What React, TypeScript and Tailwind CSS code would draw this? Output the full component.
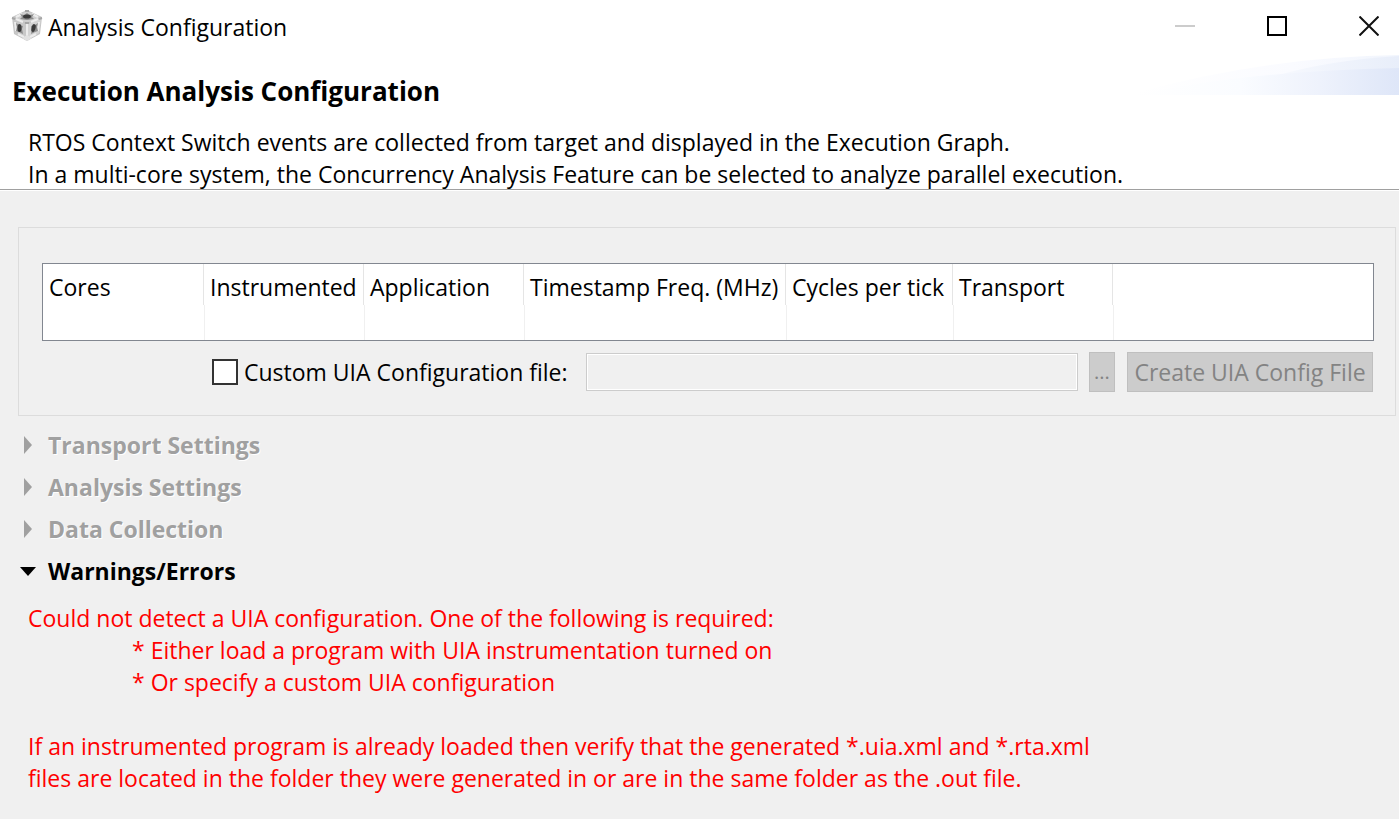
import React, { useState } from 'react';

const columns = [
  { name: 'Cores', width: 'w-[161px]' },
  { name: 'Instrumented', width: 'w-[160px]' },
  { name: 'Application', width: 'w-[160px]' },
  { name: 'Timestamp Freq. (MHz)', width: 'w-[262px]' },
  { name: 'Cycles per tick', width: 'w-[167px]' },
  { name: 'Transport', width: 'w-[160px]' },
];

const sections = ['Transport Settings', 'Analysis Settings', 'Data Collection'];

const CubeIcon = () => (
  <svg width="32" height="32" viewBox="0 0 32 32" aria-hidden="true">
    <path d="M16 0L31 7L29 24L16 31L3 24L1 7Z" fill="#c4c4c4" />
    <path d="M16 1L29 7L16 13L3 7Z" fill="#cfcfcf" />
    <path d="M2 9L15 14V30L4 23Z" fill="#c8c8c8" />
    <path d="M30 9L17 14V30L28 23Z" fill="#d4d4d4" />
    {/* light rims */}
    <path d="M5 7L11 4M21 4L27 7M5 9L12 12M20 12L27 9" stroke="#ededed" strokeWidth="2" />
    <path d="M16 14V30M4 12L5 21M28 12L27 21M7 24L13 27M25 24L19 27" stroke="#ececec" strokeWidth="2" />
    <path d="M1 8L4 9M28 9L31 8M14 1H18M14 13H18" stroke="#a6a6a6" strokeWidth="2" />
    {/* hollow centre of each face */}
    <path d="M9 4L13 5L16 3L19 5L23 4L21 7L23 9L16 10L9 9L11 7Z" fill="#8c8c8c" />
    <ellipse cx="16" cy="6.500" rx="4" ry="2" fill="#3a3a3a" />
    <path d="M5 13L8 15L12 16L11 19L12 24L8 22L5 21L6 17Z" fill="#8c8c8c" />
    <ellipse cx="8.500" cy="18" rx="2" ry="4" fill="#3a3a3a" />
    <path d="M27 13L24 15L20 16L21 19L20 24L24 22L27 21L26 17Z" fill="#8c8c8c" />
    <ellipse cx="22.500" cy="18" rx="2" ry="4" fill="#3a3a3a" transform="rotate(15 22.500 18)" />
    <path d="M11 28L16 31L21 28L16 25Z" fill="#e2e2e2" />
  </svg>
);

const BannerSwoosh = () => (
  <svg className="absolute right-0 top-0" width="264" height="40" viewBox="0 0 264 40" aria-hidden="true">
    <defs>
      <linearGradient id="swooshBack" x1="0" x2="1" y1="0" y2="0">
        <stop offset="0" stopColor="#ffffff" />
        <stop offset="0.600" stopColor="#fafbff" />
        <stop offset="1" stopColor="#f1f5fd" />
      </linearGradient>
      <linearGradient id="swooshMid" x1="0" x2="1" y1="0" y2="0">
        <stop offset="0" stopColor="#f7f9fe" />
        <stop offset="1" stopColor="#e8eefa" />
      </linearGradient>
      <linearGradient id="swooshFront" x1="0" x2="1" y1="0" y2="0">
        <stop offset="0" stopColor="#ffffff" />
        <stop offset="0.400" stopColor="#fafcff" />
        <stop offset="0.700" stopColor="#eef2fc" />
        <stop offset="1" stopColor="#dee6f8" />
      </linearGradient>
    </defs>
    <path d="M0 38Q130 2 264 0V40H0Z" fill="url(#swooshBack)" />
    <path d="M140 21Q195 5 264 1V40H140Z" fill="url(#swooshMid)" />
    <path d="M0 40Q110 16 264 13V40Z" fill="url(#swooshFront)" />
  </svg>
);

const TitleBar = () => (
  <div className="flex h-[55px] items-start justify-between">
    <div className="flex items-start gap-[5px] pl-[11px] pt-[10px]">
      <CubeIcon />
      <span className="pt-px leading-8">Analysis Configuration</span>
    </div>
    <div className="flex gap-[50px] pr-[9px] pt-[5px]">
      <button aria-label="Minimize" className="flex h-[42px] w-[42px] items-center justify-center">
        <svg width="20" height="20" viewBox="0 0 20 20">
          <path d="M0 10H20" stroke="#cccccc" strokeWidth="2" />
        </svg>
      </button>
      <button aria-label="Maximize" className="flex h-[42px] w-[42px] items-center justify-center">
        <svg width="20" height="20" viewBox="0 0 20 20">
          <rect x="1" y="1" width="18" height="18" fill="none" stroke="#000" strokeWidth="2" />
        </svg>
      </button>
      <button aria-label="Close" className="flex h-[42px] w-[42px] items-center justify-center">
        <svg width="20" height="20" viewBox="0 0 20 20">
          <path d="M0.500 0.500L19.500 19.500M19.500 0.500L0.500 19.500" stroke="#111" strokeWidth="2" />
        </svg>
      </button>
    </div>
  </div>
);

const App: React.FC = () => {
  const [custom, setCustom] = useState(false);
  const [open, setOpen] = useState(true);

  return (
    <div className="min-h-screen bg-[#f0f0f0] pb-6 font-['Open_Sans','Noto_Sans',sans-serif] text-[23px] text-black">
      <header className="border-b border-[#a0a0a0] bg-white">
        <TitleBar />
        <div className="relative pt-5">
          <BannerSwoosh />
          <h1 className="pl-3 text-[26px] font-bold leading-8">Execution Analysis Configuration</h1>
          <p className="-mb-px whitespace-nowrap pl-7 pt-[19px] leading-8">
            RTOS Context Switch events are collected from target and displayed in the Execution Graph.
            <br />
            In a multi-core system, the Concurrency Analysis Feature can be selected to analyze parallel execution.
          </p>
        </div>
      </header>

      <main className="border-t border-white pt-9">
        <section className="ml-[18px] mr-[3px] border border-[#dcdcdc] pb-[23px] pl-[23px] pr-[21px] pt-[35px]">
          <div className="border border-[#828790] bg-white">
            <table className="w-full table-fixed border-separate border-spacing-0 text-left">
              <thead>
                <tr>
                  {columns.map((column) => (
                    <th
                      key={column.name}
                      className={`${column.width} h-[41px] whitespace-nowrap border-r border-[#e5e5e5] p-0 pb-px pl-[6px] pt-[6px] font-normal leading-8`}
                    >
                      {column.name}
                    </th>
                  ))}
                  <th className="p-0"></th>
                </tr>
              </thead>
              <tbody>
                <tr>
                  <td className="h-[35px] p-0"></td>
                  {columns.map((column) => (
                    <td key={column.name} className="h-[35px] border-l border-[#f0f0f0] p-0"></td>
                  ))}
                </tr>
              </tbody>
            </table>
          </div>

          <div className="mt-[11px] flex items-center pl-[170px] pr-px">
            <label className="flex w-[374px] shrink-0 items-center gap-[6px] whitespace-nowrap leading-8">
              <input
                type="checkbox"
                checked={custom}
                onChange={(e) => setCustom(e.target.checked)}
                className="h-[26px] w-[26px] shrink-0 appearance-none border-2 border-[#333] bg-white checked:bg-[#333]"
              />
              Custom UIA Configuration file:
            </label>
            <input
              type="text"
              aria-label="Custom UIA Configuration file path"
              disabled={!custom}
              className="h-[38px] min-w-0 flex-1 border border-[#cccccc] bg-[#f0f0f0] px-2 ring-1 ring-inset ring-white"
            />
            <button
              disabled={!custom}
              className="ml-[11px] h-10 w-[26px] shrink-0 border border-[#bfbfbf] bg-[#cccccc] text-[20px] leading-8 text-[#838383]"
            >
              ...
            </button>
            <button
              disabled={!custom}
              className="ml-3 h-10 w-[246px] shrink-0 whitespace-nowrap border border-[#bfbfbf] bg-[#cccccc] leading-8 text-[#838383]"
            >
              Create UIA Config File
            </button>
          </div>
        </section>

        <div className="pl-5 pt-2">
          {sections.map((section) => (
            <button
              key={section}
              disabled
              className="flex h-[42px] items-center font-bold text-[#a0a0a0] [text-shadow:1px_1px_0_#fff]"
            >
              <svg width="28" height="18" viewBox="0 0 28 18" aria-hidden="true">
                <path d="M4 0L12 9L4 18Z" fill="#a0a0a0" />
              </svg>
              {section}
            </button>
          ))}
          <button className="flex h-[42px] items-center font-bold" aria-expanded={open} onClick={() => setOpen(!open)}>
            <svg width="28" height="18" viewBox="0 0 28 18" aria-hidden="true">
              <path d={open ? 'M0 5H16L8 14Z' : 'M4 0L12 9L4 18Z'} fill="#000" />
            </svg>
            Warnings/Errors
          </button>
        </div>

        {open && (
          <div className="whitespace-nowrap pl-7 pt-[10px] leading-8 text-[#ff0000]">
            <p>Could not detect a UIA configuration. One of the following is required:</p>
            <p className="pl-[104px]">* Either load a program with UIA instrumentation turned on</p>
            <p className="pl-[104px]">* Or specify a custom UIA configuration</p>
            <p className="pt-8">If an instrumented program is already loaded then verify that the generated *.uia.xml and *.rta.xml</p>
            <p>files are located in the folder they were generated in or are in the same folder as the .out file.</p>
          </div>
        )}
      </main>
    </div>
  );
};

export default App;
